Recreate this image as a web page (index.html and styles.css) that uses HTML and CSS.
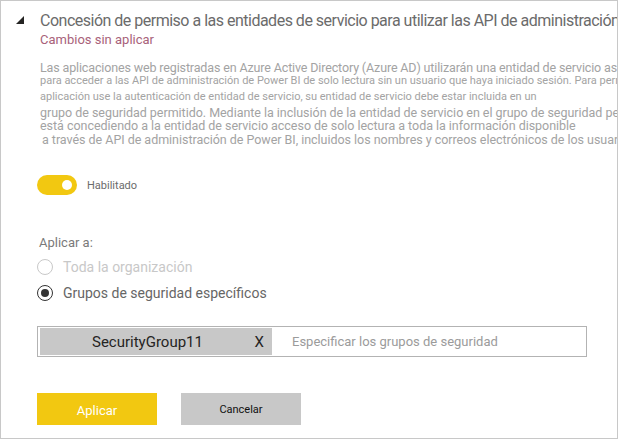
FILE: index.html
```html
<!DOCTYPE html>
<html lang="es">
<head>
<meta charset="utf-8">
<title>Concesión de permiso</title>
<link rel="stylesheet" href="styles.css">
</head>
<body>
<div class="frame">
  <div class="header">
    <svg class="caret" width="8" height="8" viewBox="0 0 8 8" aria-hidden="true"><polygon points="0,8 8,8 8,0" fill="#252423"/></svg>
    <div class="titles">
      <div class="title">Concesión de permiso a las entidades de servicio para utilizar las API de administración de Power BI</div>
      <div class="status">Cambios sin aplicar</div>
    </div>
  </div>
  <div class="body">
    <div class="desc">
      <div class="line big">Las aplicaciones web registradas en Azure Active Directory (Azure AD) utilizarán una entidad de servicio asignada</div>
      <div class="line small">para acceder a las API de administración de Power BI de solo lectura sin un usuario que haya iniciado sesión. Para permitir que una</div>
      <div class="line small">aplicación use la autenticación de entidad de servicio, su entidad de servicio debe estar incluida en un</div>
      <div class="line big">grupo de seguridad permitido. Mediante la inclusión de la entidad de servicio en el grupo de seguridad permitido,</div>
      <div class="line big">está concediendo a la entidad de servicio acceso de solo lectura a toda la información disponible</div>
      <div class="line big indent">a través de API de administración de Power BI, incluidos los nombres y correos electrónicos de los usuarios</div>
    </div>
    <div class="toggle-row">
      <span class="toggle"><span class="knob"></span></span>
      <span class="toggle-label">Habilitado</span>
    </div>
    <div class="apply-to">Aplicar a:</div>
    <div class="radio disabled">
      <span class="radio-circle"></span>
      <span class="radio-label">Toda la organización</span>
    </div>
    <div class="radio checked">
      <span class="radio-circle"><span class="dot"></span></span>
      <span class="radio-label">Grupos de seguridad específicos</span>
    </div>
    <div class="picker">
      <div class="chip">
        <span class="chip-name">SecurityGroup11</span>
        <span class="chip-x">X</span>
      </div>
      <span class="placeholder">Especificar los grupos de seguridad</span>
    </div>
    <div class="actions">
      <button class="btn primary">Aplicar</button>
      <button class="btn secondary">Cancelar</button>
    </div>
  </div>
</div>
</body>
</html>
```
FILE: styles.css
```css
* { box-sizing: border-box; }
html, body { margin: 0; padding: 0; background: #fff; }
body { font-family: Roboto, "Liberation Sans", sans-serif; }

.frame {
  width: 618px;
  height: 439px;
  border: 1px solid #c8c8c8;
  padding-left: 15px;
  overflow: hidden;
  white-space: nowrap;
}

.header {
  display: flex;
  align-items: flex-start;
  gap: 16px;
}
.caret { flex: none; margin-top: 15px; }
.titles { padding-top: 10px; min-width: 0; }
.title {
  font-size: 16px;
  letter-spacing: -0.5px;
  line-height: 20px;
  color: #6b6b6b;
}
.status {
  margin-top: 1px;
  font-size: 13px;
  line-height: 16px;
  color: #a8627a;
}

.body { margin-left: 21px; }

.desc { margin-top: 13px; padding-left: 3px; color: #a3a3a3; }
.line { line-height: 14px; height: 14px; }
.line.big { font-size: 12.5px; letter-spacing: -0.03px; }
.line.small { font-size: 11px; }
.line:nth-child(1) { height: 13px; letter-spacing: -0.14px; }
.line:nth-child(2) { height: 16px; }
.line:nth-child(3) { height: 16px; }
.line:nth-child(4) { height: 13px; }
.line.indent { padding-left: 2px; }

.toggle-row {
  margin-top: 28px;
  display: flex;
  align-items: center;
  gap: 10px;
  height: 20px;
}
.toggle {
  width: 40px;
  height: 20px;
  border-radius: 10px;
  background: #f2c811;
  display: flex;
  align-items: center;
  justify-content: flex-end;
  padding-right: 5px;
}
.knob {
  width: 10px;
  height: 10px;
  border-radius: 50%;
  background: #fff;
}
.toggle-label { font-size: 11px; color: #6b6b6b; }

.apply-to {
  margin-top: 40px;
  padding-left: 2px;
  font-size: 13px;
  line-height: 16px;
  color: #7a7a7a;
}

.radio {
  display: flex;
  align-items: center;
  gap: 10px;
  height: 16px;
  font-size: 14px;
  line-height: 16px;
}
.radio.disabled { margin-top: 8px; color: #c8c8c8; }
.radio.checked { margin-top: 10px; color: #666; }
.radio-circle {
  width: 16px;
  height: 16px;
  border-radius: 50%;
  border: 1.3px solid #c8c8c8;
  display: flex;
  align-items: center;
  justify-content: center;
}
.radio.checked .radio-circle { border-color: #333; }
.dot { width: 8px; height: 8px; border-radius: 50%; background: #333; }

.picker {
  margin-top: 25px;
  width: 550px;
  height: 31px;
  border: 1px solid #b3b3b3;
  padding: 1px 2px;
  display: flex;
  align-items: center;
}
.chip {
  width: 232px;
  height: 27px;
  background: #c8c8c8;
  display: flex;
  align-items: center;
  color: #252423;
  font-size: 15px;
}
.chip-name { margin-left: 52px; }
.chip-x { margin-left: auto; margin-right: 8px; }
.placeholder { margin-left: 20px; font-size: 13px; color: #9b9b9b; }

.actions {
  margin-top: 36px;
  display: flex;
  gap: 24px;
}
.btn {
  width: 120px;
  height: 32px;
  border: none;
  padding: 0;
  font-family: inherit;
}
.btn.primary { background: #f2c811; color: #fff; font-size: 13px; padding-top: 2px; }
.btn.secondary { background: #c8c8c8; color: #111; font-size: 11px; }
```
